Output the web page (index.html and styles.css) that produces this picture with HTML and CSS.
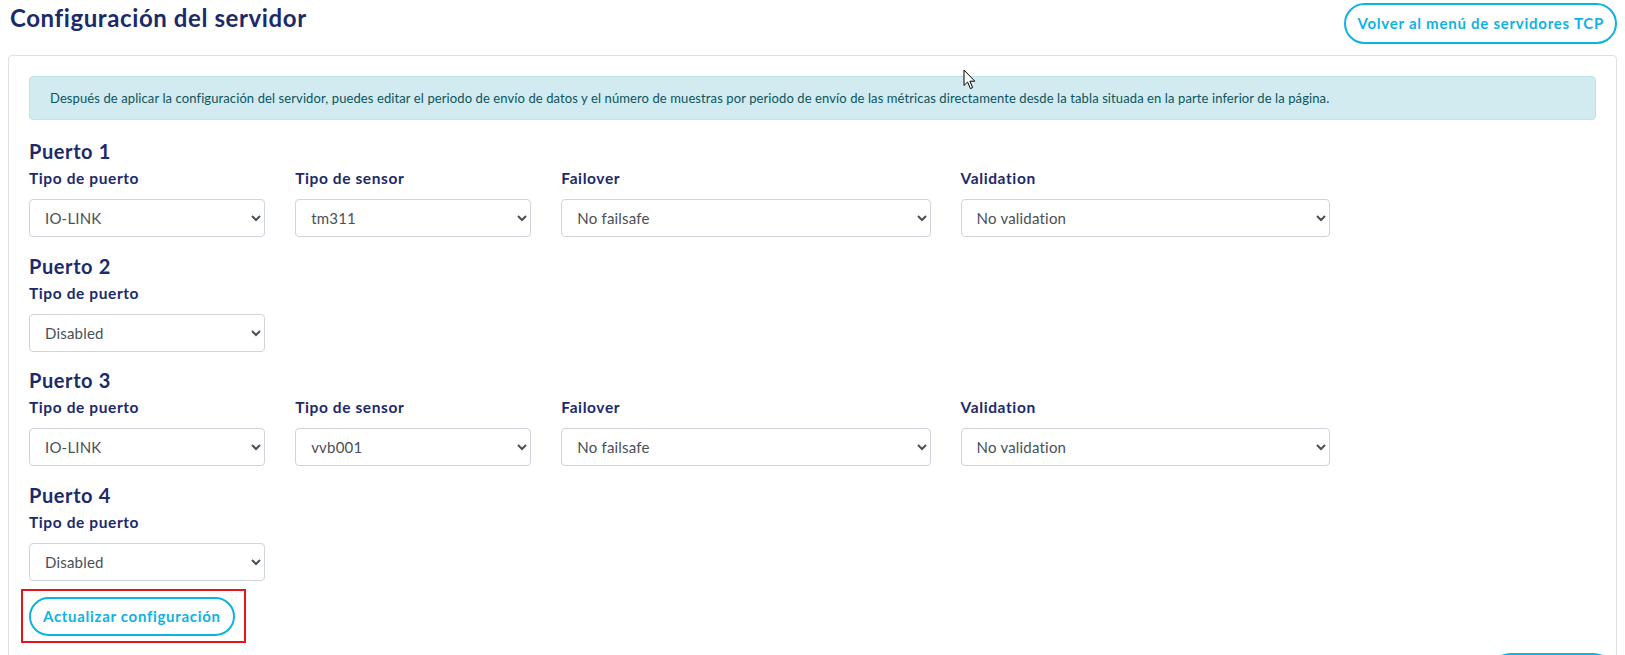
FILE: index.html
```html
<!DOCTYPE html>
<html lang="es">
<head>
    <meta charset="UTF-8">
    <meta name="viewport" content="width=device-width, initial-scale=1.0">
    <title>Configuración del servidor</title>
    <link rel="stylesheet" href="styles.css">
</head>
<body>
    <div class="page">
        <div class="page-header">
            <h1>Configuración del servidor</h1>
            <button class="btn-outline">Volver al menú de servidores TCP</button>
        </div>

        <div class="card">
            <div class="alert-info">Después de aplicar la configuración del servidor, puedes editar el periodo de envío de datos y el número de muestras por periodo de envío de las métricas directamente desde la tabla situada en la parte inferior de la página.</div>

            <section class="port">
                <h5>Puerto 1</h5>
                <div class="port-row">
                    <div class="field">
                        <label for="p1type">Tipo de puerto</label>
                        <select id="p1type"><option>IO-LINK</option><option>Disabled</option></select>
                    </div>
                    <div class="field">
                        <label for="p1sensor">Tipo de sensor</label>
                        <select id="p1sensor"><option>tm311</option><option>vvb001</option></select>
                    </div>
                    <div class="field wide">
                        <label for="p1failover">Failover</label>
                        <select id="p1failover"><option>No failsafe</option></select>
                    </div>
                    <div class="field wide">
                        <label for="p1validation">Validation</label>
                        <select id="p1validation"><option>No validation</option></select>
                    </div>
                </div>
            </section>

            <section class="port">
                <h5>Puerto 2</h5>
                <div class="port-row">
                    <div class="field">
                        <label for="p2type">Tipo de puerto</label>
                        <select id="p2type"><option>Disabled</option><option>IO-LINK</option></select>
                    </div>
                </div>
            </section>

            <section class="port">
                <h5>Puerto 3</h5>
                <div class="port-row">
                    <div class="field">
                        <label for="p3type">Tipo de puerto</label>
                        <select id="p3type"><option>IO-LINK</option><option>Disabled</option></select>
                    </div>
                    <div class="field">
                        <label for="p3sensor">Tipo de sensor</label>
                        <select id="p3sensor"><option>vvb001</option><option>tm311</option></select>
                    </div>
                    <div class="field wide">
                        <label for="p3failover">Failover</label>
                        <select id="p3failover"><option>No failsafe</option></select>
                    </div>
                    <div class="field wide">
                        <label for="p3validation">Validation</label>
                        <select id="p3validation"><option>No validation</option></select>
                    </div>
                </div>
            </section>

            <section class="port">
                <h5>Puerto 4</h5>
                <div class="port-row">
                    <div class="field">
                        <label for="p4type">Tipo de puerto</label>
                        <select id="p4type"><option>Disabled</option><option>IO-LINK</option></select>
                    </div>
                </div>
            </section>

            <div class="highlight">
                <button class="btn-outline btn-small">Actualizar configuración</button>
            </div>

            <!-- next button below the fold, only its top edge shows -->
            <div class="card-actions">
                <button class="btn-outline btn-next" aria-label="Siguiente"></button>
            </div>
        </div>
    </div>

    <!-- mouse pointer captured in the screenshot -->
    <svg class="cursor" width="13" height="21" viewBox="0 0 13 21">
        <path d="M1 1 L1 16.5 L4.6 13 L7.4 19.6 L9.6 18.6 L6.9 12.2 L11.8 12.2 Z" fill="#fff" stroke="#000" stroke-width="1" stroke-linejoin="round"/>
    </svg>
</body>
</html>
```

FILE: styles.css
```css
* { box-sizing: border-box; }
body { margin: 0; font-family: Lato, "Open Sans", sans-serif; color: #1b2a6b; background: #fff; }
.page { padding: 3px 8px 0; }

.page-header {
    display: flex;
    justify-content: space-between;
    align-items: flex-start;
    margin-bottom: 11px;
}
.page-header h1 {
    margin: 0 0 0 2px;
    font-size: 24px;
    line-height: 30px;
    font-weight: 700;
    letter-spacing: 0.6px;
    color: #1b2a6b;
}

.btn-outline {
    display: block;
    font-family: inherit;
    font-size: 15px;
    line-height: 21px;
    font-weight: 700;
    letter-spacing: 0.75px;
    color: #0db3e1;
    background: #fff;
    border: 2px solid #0db3e1;
    border-radius: 999px;
    padding: 8px 11px;
}
.btn-small { padding: 7px 12px; letter-spacing: 0.7px; }
.btn-next { width: 124px; height: 41px; }

.card {
    border: 1px solid #dfe1e4;
    border-radius: 4px;
    padding: 20px;
}

.alert-info {
    background: #d1ebf0;
    border: 1px solid #bee4eb;
    color: #0c5460;
    border-radius: 4px;
    padding: 12px 20px;
    font-size: 13px;
    line-height: 18px;
    letter-spacing: 0.1px;
    margin-bottom: 19px;
}

.port { margin-bottom: 16.5px; }
.port:last-of-type { margin-bottom: 8px; }
.port h5 { margin: 0 0 4px; font-size: 20px; line-height: 24px; font-weight: 700; letter-spacing: 0.6px; }
.port-row {
    display: grid;
    grid-template-columns: repeat(12, 1fr);
    column-gap: 30px;
}
.field { grid-column: span 2; }
.field.wide { grid-column: span 3; }
.field label {
    display: block;
    font-size: 15.5px;
    line-height: 22px;
    font-weight: 700;
    letter-spacing: 0.6px;
    margin-bottom: 10px;
}
.field select {
    width: 100%;
    height: 38px;
    padding: 0 10px 0 11px;
    font-family: inherit;
    font-size: 15px;
    letter-spacing: 0.2px;
    color: #495057;
    border: 1px solid #ced4da;
    border-radius: 4px;
    background: #fff;
}

.highlight {
    width: fit-content;
    margin-left: -8px;
    border: 2px solid #e8141b;
    padding: 6px 9px 5px 6px;
}

.card-actions {
    display: flex;
    justify-content: flex-end;
    margin-top: 10px;
    margin-right: -18px;
}

.cursor { position: absolute; left: 963px; top: 69px; }
```
